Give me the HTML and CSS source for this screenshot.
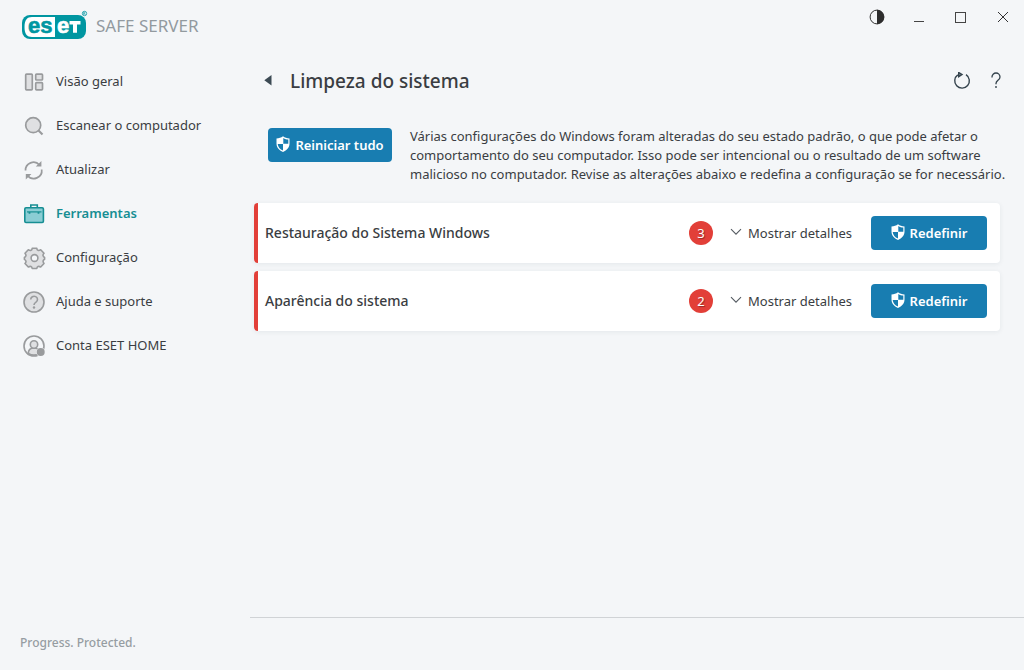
FILE: index.html
```html
<!DOCTYPE html>
<html lang="pt-BR">
<head>
<meta charset="utf-8">
<title>ESET Safe Server</title>
<link rel="stylesheet" href="styles.css">
</head>
<body>
<svg class="defs" aria-hidden="true">
  <symbol id="shield" viewBox="0 0 14 16">
    <path d="M7 .3C5.200 1.700 3 2.400.5 2.500v5C.5 11.300 3 14.300 7 15.900c4-1.600 6.500-4.600 6.500-8.400v-5C11 2.400 8.800 1.700 7 .3z" fill="#fff"/>
    <path d="M7.300 1.900c1.600 1 3.200 1.500 5 1.700v4.200h-5zM1.700 8H7v6.600C3.900 13.200 2 11 1.700 8z" fill="#187db1"/>
  </symbol>
  <symbol id="chevron" viewBox="0 0 12 8">
    <path d="M1 1.200l5 5 5-5" fill="none" stroke="#555b62" stroke-width="1.100"/>
  </symbol>
</svg>
<div class="app">
  <aside class="sidebar">
    <div class="brand">
      <svg class="logo" viewBox="0 0 68 32" role="img" aria-label="eset">
        <rect x="0" y="5" width="64" height="24" rx="8" fill="#0096a1"/>
        <path d="M33 7H10C5 7 2.500 10 2.500 17S5 27 10 27h23z" fill="#fff"/>
        <text class="logo-text" x="6" y="22.500" fill="#0096a1" stroke="#0096a1">es</text>
        <text class="logo-text" x="35" y="22.500" fill="#fff" stroke="#fff">e</text>
        <path d="M47.500 11h11v3.500h-3.500v8.200h-4v-8.200h-3.500z" fill="#fff"/>
        <circle cx="62.500" cy="3.500" r="2.200" fill="none" stroke="#0096a1" stroke-width=".8"/>
        <path d="M61.700 4.900V2.300h1q.8.7 0 1.400h-1m.9 0 .7 1.200" fill="none" stroke="#0096a1" stroke-width=".6"/>
      </svg>
      <span class="product">SAFE SERVER</span>
    </div>
    <nav class="nav">
      <a class="nav-item" href="#">
        <svg class="icon" viewBox="0 0 24 24"><g fill="#dfe0e2" stroke="#999b9d" stroke-width="1.700"><rect x="2.700" y="4.200" width="6.600" height="15.600" rx=".8"/><rect x="12.700" y="4.200" width="6.800" height="5.800" rx=".8"/><rect x="12.700" y="12.700" width="6.800" height="7.100" rx=".8"/></g></svg>
        <span>Visão geral</span></a>
      <a class="nav-item" href="#">
        <svg class="icon" viewBox="0 0 24 24"><circle cx="10.200" cy="11.200" r="7.500" fill="#dfe0e2" stroke="#999b9d" stroke-width="1.700"/><path d="M15.500 16.500l4 4" stroke="#999b9d" stroke-width="2.200"/></svg>
        <span>Escanear o computador</span></a>
      <a class="nav-item" href="#">
        <svg class="icon" viewBox="0 0 24 24"><g fill="none" stroke="#999b9d" stroke-width="1.700"><path d="M2.500 12.500A8 8 0 0 1 16.500 7M18.700 11.500A8 8 0 0 1 4.500 17.500"/></g><path d="M18.400 3v5.600h-5.600zM2.800 21.500v-5.600h5.600z" fill="#999b9d"/></svg>
        <span>Atualizar</span></a>
      <a class="nav-item active" href="#" aria-current="page">
        <svg class="icon" viewBox="0 0 24 24"><path d="M7.800 6V3h6.500v3" fill="none" stroke="#168e93" stroke-width="1.600"/><rect x="1.800" y="5.700" width="18.600" height="14.800" rx="1.200" fill="#8acdd4" stroke="#168e93" stroke-width="1.600"/><path d="M4 9.900h14.500" stroke="#168e93" stroke-width="1.200"/><path d="M6.500 10v1.800M15.500 10v1.800" stroke="#168e93" stroke-width="1.800"/></svg>
        <span>Ferramentas</span></a>
      <a class="nav-item" href="#">
        <svg class="icon" viewBox="0 0 24 24"><path d="M8 4.300q1-.4 1.200-2h4.600q.2 1.600 1.200 2t2.700-.5l3.300 3.500q-1.300 1.500-.9 2.500t1.500 1.700v1.800q-1.300.7-1.500 1.700t.9 2.500l-3.300 3.500q-1.700-.9-2.700-.5t-1.200 2H9.200q-.2-1.600-1.200-2t-2.700.5L2 17.500Q3.300 16 2.900 15t-1.500-1.700v-1.800q1.200-.7 1.500-1.700T2 7.300l3.300-3.500Q7 4.700 8 4.300z" fill="#dfe0e2" stroke="#999b9d" stroke-width="1.600" stroke-linejoin="round"/><circle cx="11.500" cy="12" r="3.400" fill="#f4f6f8" stroke="#999b9d" stroke-width="1.600"/></svg>
        <span>Configuração</span></a>
      <a class="nav-item" href="#">
        <svg class="icon" viewBox="0 0 24 24"><circle cx="11" cy="12" r="10" fill="#dfe0e2" stroke="#999b9d" stroke-width="1.600"/><path d="M7.700 9.500a3.400 3.200 0 1 1 5.300 2.600c-1.400.9-2 1.500-2 3" fill="none" stroke="#999b9d" stroke-width="1.600"/><circle cx="11" cy="17.500" r="1.200" fill="#999b9d"/></svg>
        <span>Ajuda e suporte</span></a>
      <a class="nav-item" href="#">
        <svg class="icon" viewBox="0 0 24 24"><circle cx="11" cy="12" r="10" fill="#f4f6f8" stroke="#999b9d" stroke-width="1.600"/><path d="M5.300 19.500c0-3.500 2-5.500 5.700-5.500s5.700 2 5.700 5.500c-3.500 2-8 2-11.400 0z" fill="#dfe0e2" stroke="#999b9d" stroke-width="1.600"/><circle cx="11" cy="10.500" r="3.700" fill="#dfe0e2" stroke="#999b9d" stroke-width="1.600"/><circle cx="17.700" cy="18" r="4.600" fill="#f4f6f8"/><circle cx="17.700" cy="18" r="4" fill="#999b9d"/></svg>
        <span>Conta ESET HOME</span></a>
    </nav>
    <p class="tagline">Progress. Protected.</p>
  </aside>
  <div class="content">
    <div class="window-bar">
      <button class="plain" aria-label="Tema"><svg width="16" height="16" viewBox="0 0 16 16"><circle cx="8" cy="8" r="6.900" fill="none" stroke="#333" stroke-width="1"/><path d="M8 .8a7.200 7.200 0 0 1 0 14.400z" fill="#2d2d2d"/></svg></button>
      <button class="plain" aria-label="Minimizar"><svg width="16" height="16" viewBox="0 0 16 16"><path d="M3 12.500h10" stroke="#444" stroke-width="1"/></svg></button>
      <button class="plain" aria-label="Maximizar"><svg width="16" height="16" viewBox="0 0 16 16"><rect x="2.500" y="3.500" width="10" height="10" fill="none" stroke="#444" stroke-width="1"/></svg></button>
      <button class="plain" aria-label="Fechar"><svg width="16" height="16" viewBox="0 0 16 16"><path d="M3 3l10 10M13 3L3 13" stroke="#333" stroke-width="1"/></svg></button>
    </div>
    <main class="main">
      <header class="page-head">
        <button class="plain" aria-label="Voltar"><svg width="8" height="12" viewBox="0 0 8 12"><path d="M7.500 0v10.500L.3 5.200z" fill="#3c4a54"/></svg></button>
        <h1>Limpeza do sistema</h1>
        <div class="head-actions">
          <button class="plain" aria-label="Atualizar"><svg width="18" height="18" viewBox="0 0 18 18"><path d="M13 2.700A7.300 7.300 0 1 1 4.800 2.900" fill="none" stroke="#34434d" stroke-width="1.400"/><path d="M5.700.5 9 2.500 5.700 4.700z" fill="#8a949b" stroke="#34434d" stroke-width="1.400"/></svg></button>
          <button class="plain" aria-label="Ajuda"><svg width="10" height="18" viewBox="0 0 10 18"><path d="M1 5.400V5a4 4 0 0 1 8 0c0 3.200-4 3.500-4 6.500v.8" fill="none" stroke="#34434d" stroke-width="1.300"/><circle cx="5" cy="15" r=".9" fill="#34434d"/></svg></button>
        </div>
      </header>
      <section class="intro">
        <button class="primary reset-all"><svg class="shield"><use href="#shield"/></svg>Reiniciar tudo</button>
        <p>Várias configurações do Windows foram alteradas do seu estado padrão, o que pode afetar o<br>comportamento do seu computador. Isso pode ser intencional ou o resultado de um software<br>malicioso no computador. Revise as alterações abaixo e redefina a configuração se for necessário.</p>
      </section>
      <section class="cards">
        <article class="card">
          <h2>Restauração do Sistema Windows</h2>
          <span class="badge">3</span>
          <button class="plain details"><svg class="chevron"><use href="#chevron"/></svg>Mostrar detalhes</button>
          <button class="primary reset"><svg class="shield"><use href="#shield"/></svg>Redefinir</button>
        </article>
        <article class="card">
          <h2>Aparência do sistema</h2>
          <span class="badge">2</span>
          <button class="plain details"><svg class="chevron"><use href="#chevron"/></svg>Mostrar detalhes</button>
          <button class="primary reset"><svg class="shield"><use href="#shield"/></svg>Redefinir</button>
        </article>
      </section>
    </main>
    <footer class="footer"></footer>
  </div>
</div>
</body>
</html>
```
FILE: styles.css
```css
* { box-sizing: border-box; }
body, h1, h2, p { margin: 0; }
body {
  background: #f4f6f8;
  color: #3a3d42;
  font-family: "Noto Sans", "Open Sans", sans-serif;
  font-size: 13px;
  line-height: 19px;
}
button { font: inherit; color: inherit; border: 0; cursor: pointer; }
svg { flex: none; display: block; }
.defs { display: none; }
.app { display: grid; grid-template-columns: 250px 1fr; min-height: 100vh; }
.sidebar { display: flex; flex-direction: column; }
.brand { display: flex; align-items: center; gap: 6px; padding: 10px 0 0 22px; }
.logo { width: 68px; height: 32px; }
.logo-text { font-family: "Liberation Sans", Arial, sans-serif; font-weight: 700; font-size: 22px; stroke-width: .6px; }
.product { font-size: 17px; color: #929a9f; line-height: 24px; }
.nav { display: flex; flex-direction: column; padding: 17px 0 0 23px; }
.nav-item { display: flex; align-items: center; gap: 9px; height: 44px; color: inherit; text-decoration: none; }
.nav-item .icon { width: 24px; height: 24px; margin-top: 2px; }
.nav-item.active { color: #168e93; font-weight: 600; }
.tagline { margin-top: auto; padding: 0 0 18px 20px; font-size: 12px; line-height: 18px; font-weight: 500; color: #969da2; }
.content { display: flex; flex-direction: column; min-width: 0; }
.plain { background: none; padding: 0; display: flex; align-items: center; }
.window-bar { display: flex; justify-content: flex-end; gap: 26px; padding: 9px 13px 0 0; }
.main { flex: 1; padding: 40px 24px 0 4px; }
.page-head { display: flex; align-items: center; height: 32px; padding-left: 10px; }
h1 { margin-left: 18px; font-size: 19px; font-weight: 500; line-height: 28px; }
.head-actions { display: flex; gap: 20px; margin: 0 -1px 0 auto; }
.intro { display: flex; align-items: flex-start; gap: 18px; padding: 30px 0 0 14px; }
.intro p { white-space: nowrap; }
.primary {
  display: flex; align-items: center; justify-content: center; gap: 5px;
  flex: none; height: 34px; padding: 0;
  border-radius: 4px; background: #187db1; color: #fff; font-weight: 600;
}
.reset-all { width: 124px; margin-top: 1px; }
.reset { width: 116px; }
.shield { width: 14px; height: 16px; margin-bottom: 2px; }
.cards { display: flex; flex-direction: column; gap: 8px; margin-top: 19px; }
.card {
  display: flex; align-items: center; height: 60px; padding: 0 13px 0 7px;
  background: #fff; border-left: 4px solid #e23f38; border-radius: 4px;
  box-shadow: 0 1px 5px rgba(40, 60, 80, .08);
}
h2 { flex: 1; font-size: 14px; font-weight: 500; line-height: 20px; }
.badge {
  width: 24px; height: 24px; border-radius: 12px; background: #e23f38; color: #fff;
  line-height: 24px; text-align: center; text-shadow: 1px 1px 1px rgba(0, 0, 0, .35);
}
.details { margin: 0 19px 0 17px; gap: 6px; }
.chevron { width: 12px; height: 8px; margin-bottom: 2px; }
.footer { height: 53px; border-top: 1px solid #d0d3d6; }
```
